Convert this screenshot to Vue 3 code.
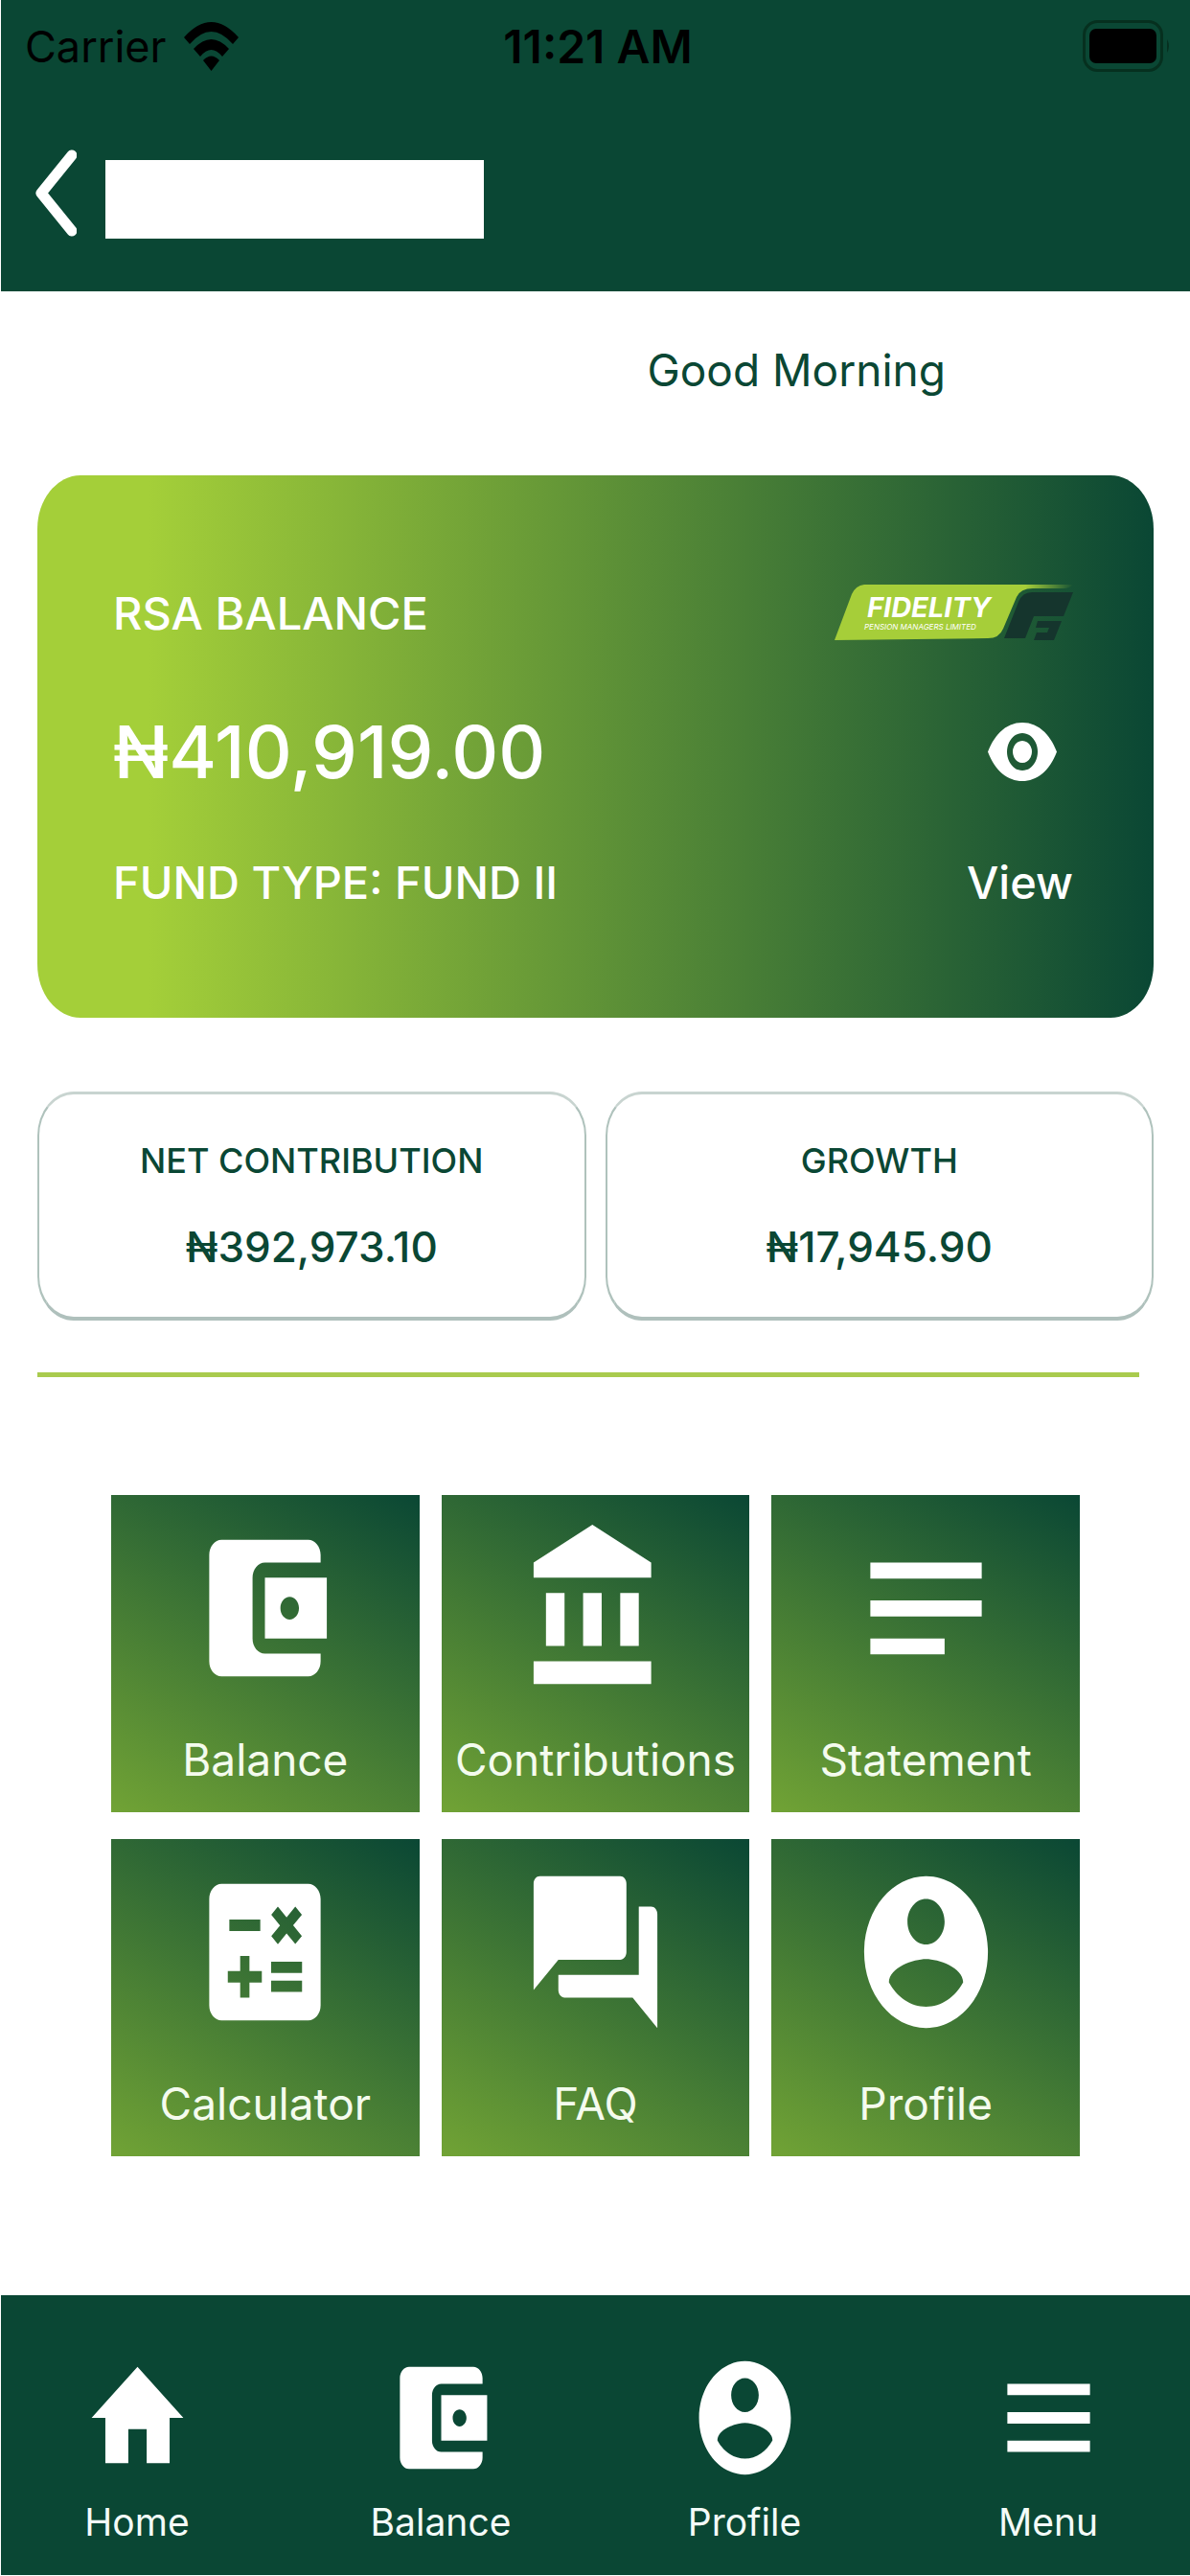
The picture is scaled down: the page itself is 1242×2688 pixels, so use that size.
<script setup>
const icons = {
  wallet:
    'M21 18v1c0 1.1-.9 2-2 2H5c-1.11 0-2-.9-2-2V5c0-1.1.89-2 2-2h14c1.1 0 2 .9 2 2v1h-9c-1.11 0-2 .9-2 2v8c0 1.1.89 2 2 2h9zm-9-2h10V8H12v8zm4-2.5c-.83 0-1.5-.67-1.5-1.5s.67-1.5 1.5-1.5 1.5.67 1.5 1.5-.67 1.5-1.5 1.5z',
  bank: 'M4 10v7h3v-7H4zm6 0v7h3v-7h-3zM2 22h19v-3H2v3zm14-12v7h3v-7h-3zM11.5 1L2 6v2h19V6l-9.5-5z',
  notes: 'M3 6h18v2.1H3zM3 11h18v2.1H3zM3 16h12v2.1H3z',
  calculator:
    'M19 3H5c-1.1 0-2 .9-2 2v14c0 1.1.9 2 2 2h14c1.1 0 2-.9 2-2V5c0-1.1-.9-2-2-2zm-5.97 4.06L14.09 6l1.41 1.41L16.91 6l1.06 1.06-1.41 1.41 1.41 1.41-1.06 1.06-1.41-1.4-1.41 1.41-1.06-1.06 1.41-1.41-1.41-1.42zm-6.78.66h5v1.5h-5v-1.5zM11.5 16h-2v2H8v-2H6v-1.5h2v-2h1.5v2h2V16zm6.5 1.25h-5v-1.5h5v1.5zm0-2.5h-5v-1.5h5v1.5z',
  chat: 'M21 6h-2v9H6v2c0 .55.45 1 1 1h11l4 4V7c0-.55-.45-1-1-1zm-4 6V3c0-.55-.45-1-1-1H3c-.55 0-1 .45-1 1v14l4-4h10c.55 0 1-.45 1-1z',
  profile:
    'M12 2C6.48 2 2 6.48 2 12s4.48 10 10 10 10-4.48 10-10S17.52 2 12 2zm0 3c1.66 0 3 1.34 3 3s-1.34 3-3 3-3-1.34-3-3 1.34-3 3-3zm0 14.2c-2.5 0-4.71-1.28-6-3.22.03-1.99 4-3.08 6-3.08 1.99 0 5.97 1.09 6 3.08-1.29 1.94-3.5 3.22-6 3.22z',
  home: 'M10 20v-6h4v6h5v-8h3L12 3 2 12h3v8z',
  menu: 'M3 18h18v-2H3v2zm0-5h18v-2H3v2zm0-7v2h18V6H3z',
}

const stats = [
  { label: 'NET CONTRIBUTION', value: '₦392,973.10' },
  { label: 'GROWTH', value: '₦17,945.90' },
]

const tiles = [
  { label: 'Balance', icon: 'wallet' },
  { label: 'Contributions', icon: 'bank' },
  { label: 'Statement', icon: 'notes' },
  { label: 'Calculator', icon: 'calculator' },
  { label: 'FAQ', icon: 'chat' },
  { label: 'Profile', icon: 'profile' },
]

const tabs = [
  { label: 'Home', icon: 'home' },
  { label: 'Balance', icon: 'wallet' },
  { label: 'Profile', icon: 'profile' },
  { label: 'Menu', icon: 'menu' },
]
</script>

<template>
  <div class="page">
    <header class="header">
      <div class="status">
        <div class="carrier">
          <span>Carrier</span>
          <svg class="wifi" viewBox="0 0 57 51" aria-hidden="true">
            <path d="M0 16Q28.500 -16 57 16L51 23Q28.500 -3 6 23Z" />
            <path d="M10 28Q28.500 8 47 28L40 36Q28.500 22 17 36Z" />
            <path d="M20 40Q28.500 31 37 40L28.500 51Z" />
          </svg>
        </div>
        <span class="time">11:21 AM</span>
        <div class="battery-slot">
          <svg class="battery" viewBox="0 0 92 54" aria-hidden="true">
            <rect x="1.500" y="1.500" width="81" height="51" rx="14" fill="none" stroke="#06301f" stroke-width="3" />
            <rect x="7" y="9" width="70" height="36" rx="7" />
            <path d="M88 20q4 7 0 14z" fill="#06301f" />
          </svg>
        </div>
      </div>
      <div class="nav">
        <button class="back" type="button" aria-label="Back">
          <svg viewBox="0 0 43 91" aria-hidden="true">
            <path d="M38 6L6 45.500L38 85" fill="none" stroke="#fff" stroke-width="11" stroke-linecap="round" stroke-linejoin="round" />
          </svg>
        </button>
        <div class="title-block"></div>
      </div>
    </header>

    <main class="main">
      <p class="greeting">Good Morning</p>

      <section class="card">
        <div class="row">
          <span class="card-text">RSA BALANCE</span>
          <svg class="logo" viewBox="0 0 249 58" role="img" aria-label="Fidelity">
            <defs>
              <linearGradient id="swoosh" x1="0" x2="1">
                <stop offset="0.800" stop-color="#a6ce39" />
                <stop offset="1" stop-color="#a6ce39" stop-opacity="0" />
              </linearGradient>
            </defs>
            <path fill="url(#swoosh)" d="M0 58L18 10Q22 1 31 0H249Q246 4 238 4H207Q194 4 190 13L176 46Q172 56 160 56Z" />
            <path fill="#15352d" d="M192 18Q196 8 206 8H249L239 33H208L199 56H177Z" />
            <path fill="#15352d" d="M212 38H237L229 58H208L211 50H222L224 45H210Z" />
            <text x="34" y="34" class="logo-name">FIDELITY</text>
            <text x="31" y="47" class="logo-tag">PENSION MANAGERS LIMITED</text>
          </svg>
        </div>
        <div class="row row-amount">
          <span class="amount">₦410,919.00</span>
          <svg class="eye" viewBox="0 0 72 61" aria-hidden="true">
            <path fill="#fff" fill-rule="evenodd" d="M0 30.500C8 10 21 0 36 0S64 10 72 30.500C64 51 51 61 36 61S8 51 0 30.500ZM36 11a16 19.500 0 1 0 .01 0ZM36 19a10 11.500 0 1 1 -.01 0Z" />
          </svg>
        </div>
        <div class="row">
          <span class="card-text">FUND TYPE: FUND II</span>
          <button class="view" type="button">View</button>
        </div>
      </section>

      <section class="stats">
        <div v-for="s in stats" :key="s.label" class="stat">
          <span class="stat-label">{{ s.label }}</span>
          <span class="stat-value">{{ s.value }}</span>
        </div>
      </section>

      <hr class="divider" />

      <section class="tiles">
        <button v-for="t in tiles" :key="t.label" class="tile" type="button">
          <svg class="tile-icon" viewBox="0 0 24 24" preserveAspectRatio="none" aria-hidden="true">
            <path :d="icons[t.icon]" fill="#fff" />
          </svg>
          <span>{{ t.label }}</span>
        </button>
      </section>
    </main>

    <nav class="tabs">
      <a v-for="t in tabs" :key="t.label" class="tab" href="#">
        <svg class="tab-icon" viewBox="0 0 24 24" preserveAspectRatio="none" aria-hidden="true">
          <path :d="icons[t.icon]" fill="#fff" />
        </svg>
        <span>{{ t.label }}</span>
      </a>
    </nav>
  </div>
</template>

<style>
body {
  margin: 0;
  background: #fff;
}
</style>

<style scoped>
.page {
  box-sizing: border-box;
  display: flex;
  flex-direction: column;
  min-height: 100vh;
  padding: 0 0 1px 1px;
  font-family: Inter, 'Liberation Sans', sans-serif;
  color: #0a4734;
}
button {
  border: 0;
  padding: 0;
  background: none;
  font: inherit;
  color: inherit;
}
svg {
  display: block;
  flex: none;
}
.header {
  background: #0a4734;
}
.status {
  display: grid;
  grid-template-columns: 1fr auto 1fr;
  align-items: center;
  height: 96px;
  padding: 0 20px 0 25px;
  font-size: 45px;
  color: #000;
}
.carrier {
  display: flex;
  align-items: center;
  gap: 18px;
}
.wifi {
  width: 57px;
  height: 51px;
}
.time {
  font-size: 48px;
  font-weight: 600;
}
.battery-slot {
  display: flex;
  justify-content: flex-end;
}
.battery {
  width: 92px;
  height: 54px;
}
.nav {
  display: flex;
  gap: 30px;
  padding: 57px 36px 55px;
}
.back svg {
  width: 43px;
  height: 91px;
}
.title-block {
  width: 395px;
  height: 82px;
  margin-top: 14px;
  background: #fff;
}
.main {
  padding: 42px 38px 0 38px;
}
.greeting {
  margin: 0 0 70px 36%;
  font-size: 46px;
  line-height: 80px;
  text-align: center;
}
.card {
  display: flex;
  flex-direction: column;
  padding: 113px 84px 112px 79px;
  border-radius: 45px / 56px;
  background: linear-gradient(90deg, #a4cf39 10%, #0a4734 100%);
  color: #fff;
}
.row {
  display: flex;
  align-items: center;
  justify-content: space-between;
  height: 60px;
}
.row-amount {
  height: 100px;
  margin: 65px 0 56px;
}
.card-text,
.view {
  font-size: 47px;
  font-weight: 500;
}
.logo {
  width: 249px;
  height: 58px;
}
.logo-name {
  fill: #fff;
  font-size: 29px;
  font-weight: 700;
  font-style: italic;
}
.logo-tag {
  fill: #fff;
  font-size: 8px;
  font-style: italic;
}
.amount {
  font-size: 76px;
  font-weight: 500;
}
.eye {
  width: 72px;
  height: 61px;
  margin-right: 17px;
}
.stats {
  display: grid;
  grid-template-columns: 1fr 1fr;
  gap: 20px;
  margin-top: 77px;
}
.stat {
  display: flex;
  flex-direction: column;
  align-items: center;
  gap: 35px;
  padding: 44px 0 43px;
  border: 2px solid #afc2bc;
  border-top: 3px solid #c8d4d0;
  border-bottom: 4px solid #afc0bc;
  border-radius: 38px / 46px;
  font-weight: 500;
}
.stat-label {
  font-size: 36px;
  line-height: 50px;
}
.stat-value {
  font-size: 44px;
  line-height: 60px;
}
.divider {
  height: 5px;
  margin: 54px 15px 123px 0;
  border: 0;
  background: #a9cb4e;
}
.tiles {
  display: grid;
  grid-template-columns: repeat(3, 1fr);
  gap: 28px 23px;
  padding: 0 77px;
}
.tile {
  display: flex;
  flex-direction: column;
  align-items: center;
  gap: 33px;
  padding: 23px 0 25px;
  background: linear-gradient(30deg, #71a335 0%, #0a4734 100%);
  font-size: 46px;
  line-height: 60px;
  color: #f4fbee;
}
.tile-icon {
  width: 155px;
  height: 190px;
}
.tabs {
  display: flex;
  justify-content: space-between;
  margin-top: auto;
  padding: 57px 73px 30px 67px;
  background: #0a4734;
}
.tab {
  display: flex;
  flex-direction: column;
  align-items: center;
  gap: 13px;
  width: 150px;
  font-size: 39px;
  line-height: 50px;
  color: #f4fbf8;
  text-decoration: none;
}
.tab-icon {
  width: 115px;
  height: 142px;
}
</style>
